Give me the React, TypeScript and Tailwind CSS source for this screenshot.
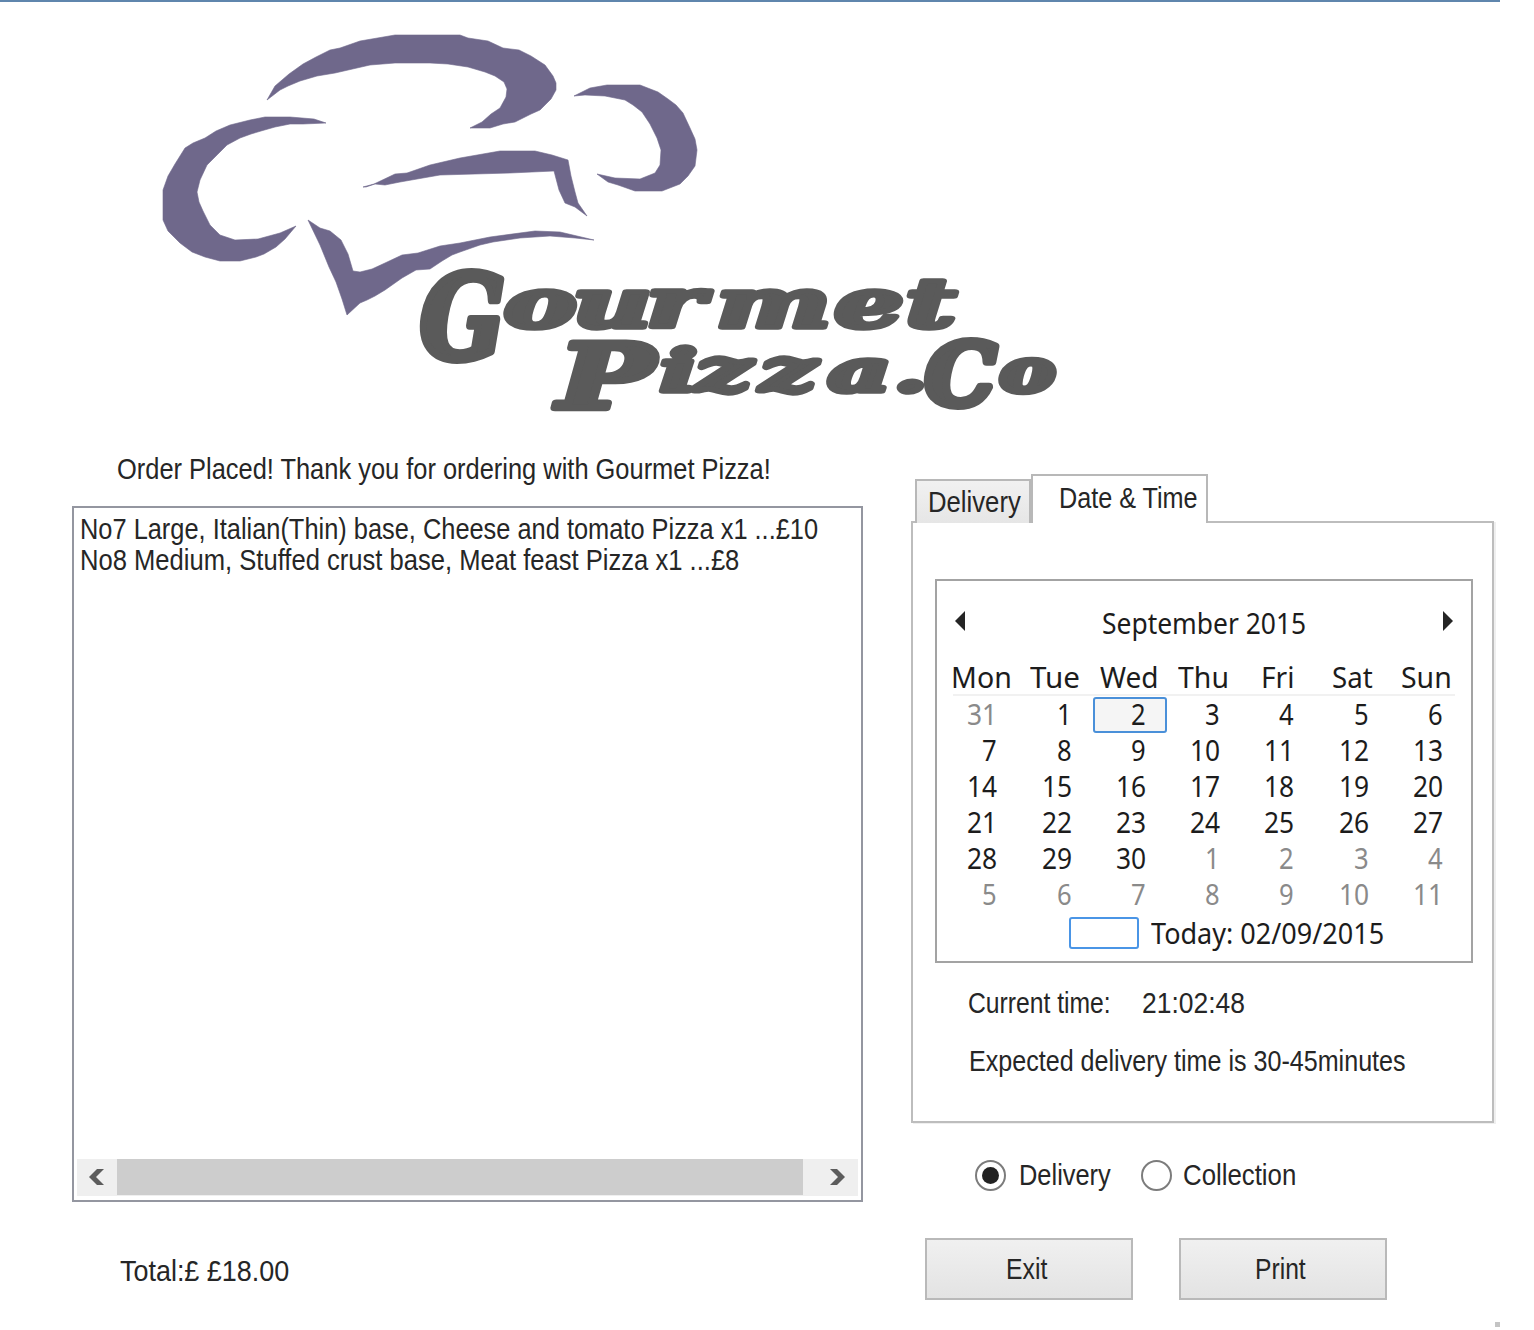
import { useLayoutEffect, useRef, useState } from "react";

/** Single line of text condensed or widened to fill its container. */
function Fit({ children, className }: { children: string; className: string }) {
  const box = useRef<HTMLSpanElement>(null);
  const text = useRef<HTMLSpanElement>(null);
  const [scale, setScale] = useState(1);
  useLayoutEffect(() => {
    if (box.current && text.current) {
      setScale(box.current.clientWidth / text.current.offsetWidth);
    }
  }, [children]);
  return (
    <span ref={box} className={`block shrink-0 ${className}`}>
      <span ref={text} className="inline-block origin-left whitespace-pre" style={{ transform: `scaleX(${scale})` }}>
        {children}
      </span>
    </span>
  );
}

function Logo() {
  return (
    <svg className="block h-[438px] w-[1500px]" viewBox="0 2 1500 438">
      <g fill="#6f688b" stroke="#6f688b" strokeWidth="0.6" strokeLinejoin="round">
        <path d="M267 100L275 86L289 74L303 64L316 57L330 50L340 48L360 41L395 35H460L468 38L488 41L503 48L519 50L531 56L545 65L553 76L556 83V90L551 99L540 110L531 114L515 122L503 124L490 128H470L482 122L491 114L500 108L506 97L507 89L504 82L495 76L485 72L468 67L448 64L430 63L395 63L370 65L335 73L317 76L300 81L288 86L280 90Z" />
        <path d="M326 123L314 119L290 117H265L250 120L230 125L216 131L205 138L193 143L185 148L175 164L168 176L163 190V220L168 231L180 243L192 252L205 257L220 261L240 261L256 257L264 254L276 247L285 239L296 226L280 233L258 239L235 240L220 235L210 225L203 211L199 202L197 192L200 180L207 165L218 154L227 145L240 138L251 134L261 131L275 127L290 124L303 124Z" />
        <path d="M574 96L590 88L607 85H640L658 92L668 99L676 105L683 113L690 128L695 139L697 150L695 166L688 176L680 184L662 191H635L618 185L608 182L597 174L615 178L640 179L655 173L660 165L661 150L657 138L650 124L642 112L633 105L625 100L605 96L585 95Z" />
        <path d="M363 187L374 184L395 174L407 173L430 165L460 158L500 151H535L552 155L568 160L571 176L575 192L578 203L587 216L575 207L565 203L559 190L554 171L510 173L440 175L400 182L385 185L375 184L366 187Z" />
        <path d="M308 220L320 228L330 231L341 240L348 254L353 271L360 272L372 269L385 263L402 255L418 253L440 246L460 243L490 237L535 231L560 232L594 240L575 238L550 236L520 238L493 242L480 245L460 252L452 255L442 261L430 269L416 270L402 278L385 290L375 296L367 300L360 303L347 315L342 299L336 282L329 267L320 245Z" />
      </g>
      <g
        fill="#5a5a5a"
        stroke="#5a5a5a"
        strokeWidth="6.5"
        strokeLinejoin="round"
        fontFamily="'DejaVu Serif', serif"
        fontWeight="bold"
        fontStyle="italic"
      >
        <text transform="translate(420 358) scale(0.86 1)" fontSize="116" strokeWidth="8">G</text>
        <text transform="translate(504 327) scale(1.62 1)" fontSize="67" x="0 42.500 88 131 204 248" strokeWidth="5.5">ourmet</text>
        <text transform="translate(558 408) scale(1.42 1)" fontSize="90">P</text>
        <text transform="translate(660 391) scale(1.68 1)" fontSize="58" strokeWidth="5.5" x="0 21.500 60 100 139">izza.</text>
        <text transform="translate(925 405) scale(1.04 1)" fontSize="86" strokeWidth="8">C</text>
        <text transform="translate(1000 391) scale(1.42 1)" fontSize="58">o</text>
      </g>
    </svg>
  );
}

function OrderList() {
  return (
    <div className="flex h-[696px] w-[791px] flex-col border-2 border-[#9496a0] bg-white px-[3px] pb-[3px]">
      <div className="h-[651px] pt-[6px] pl-[3px] leading-[31px]">
        <Fit className="w-[738px]">No7 Large, Italian(Thin) base, Cheese and tomato Pizza x1 ...£10</Fit>
        <Fit className="w-[659px]">No8 Medium, Stuffed crust base, Meat feast Pizza x1 ...£8</Fit>
      </div>
      <div className="flex h-[37px] items-start bg-[#efefef]">
        <svg className="w-10 shrink-0" height="37" viewBox="0 0 40 37">
          <path d="M12 18L20 10H27L19 18L27 26H20Z" fill="#5c5c5c" />
        </svg>
        <div className="h-[36px] w-[686px] shrink-0 bg-[#cdcdcd]" />
        <svg className="ml-[14px] w-10 shrink-0" height="37" viewBox="0 0 40 37">
          <path d="M28 18L20 10H13L21 18L13 26H20Z" fill="#5c5c5c" />
        </svg>
      </div>
    </div>
  );
}

const weekdays: [string, string][] = [
  ["Mon", "w-[61px]"],
  ["Tue", "w-[50px]"],
  ["Wed", "w-[59px]"],
  ["Thu", "w-[51px]"],
  ["Fri", "w-[34px]"],
  ["Sat", "w-[41px]"],
  ["Sun", "w-[51px]"],
];

const days = [31, ...Array.from({ length: 30 }, (_, i) => i + 1), ...Array.from({ length: 11 }, (_, i) => i + 1)];

function Calendar() {
  return (
    <div className="h-[384px] w-[538px] border-2 border-[#a3a3a3] px-[7px] font-['Noto_Sans','Open_Sans',sans-serif] text-[29px] text-[#1c1c1c]">
      <div className="mt-[22px] flex h-[40px] items-center justify-between px-[11px]">
        <svg width="11" height="20" viewBox="0 0 11 20" className="mb-[4px]"><path d="M0 10L10 0V20Z" fill="#252525" /></svg>
        <Fit className="w-[204px] leading-[40px]">September 2015</Fit>
        <svg width="11" height="20" viewBox="0 0 11 20" className="mb-[4px]"><path d="M11 10L1 0V20Z" fill="#252525" /></svg>
      </div>
      <div className="mt-[12px] grid h-[39px] grid-cols-7 leading-[43px]">
        {weekdays.map(([name, width]) => (
          <div key={name} className="flex justify-center">
            <Fit className={width}>{name}</Fit>
          </div>
        ))}
      </div>
      <div className="mx-[9px] mb-px h-[2px] bg-[#f1f1f1]" />
      <div className="grid grid-cols-7">
        {days.map((day, i) => (
          <div
            key={i}
            className={`flex h-[36px] items-start justify-end rounded-[3px] border-2 pr-[19px] leading-[30px] ${
              i === 2 ? "border-[#4a90d9] bg-[#f5f5f5]" : "border-transparent"
            } ${i === 0 || i > 30 ? "text-[#8a8a8a]" : ""}`}
          >
            <Fit className={day > 9 ? "w-[30px]" : "w-[15px]"}>{String(day)}</Fit>
          </div>
        ))}
      </div>
      <div className="mt-[4px] flex h-[32px] items-center pl-[125px]">
        <div className="mr-[12px] h-[32px] w-[70px] rounded-[3px] border-[2.500px] border-[#4a95e6]" />
        <Fit className="w-[233px] leading-[32px]">Today: 02/09/2015</Fit>
      </div>
    </div>
  );
}

function Tabs() {
  return (
    <div className="w-[583px]">
      <div className="flex h-[49px] items-end pl-[4px]">
        <div className="flex h-[44px] w-[116px] items-center border-2 border-b-0 border-[#b8b8b8] bg-linear-to-b from-[#f1f1f1] to-[#e6e6e6] pl-[11px]">
          <Fit className="w-[93px]">Delivery</Fit>
        </div>
        <div className="relative z-10 flex h-[49px] w-[177px] items-center border-2 border-b-0 border-[#b8b8b8] bg-white pb-[4px] pl-[26px]">
          <Fit className="w-[139px]">Date &amp; Time</Fit>
        </div>
      </div>
      <div className="-mt-[2px] h-[602px] w-[583px] border-2 border-[#bdbdbd] px-[22px] pt-[56px] shadow-[2px_1px_0_#efefef]">
        <Calendar />
        <div className="mt-[21px] flex h-[38px] items-center pl-[33px]">
          <Fit className="w-[143px]">Current time:</Fit>
          <Fit className="ml-[31px] w-[103px]">21:02:48</Fit>
        </div>
        <div className="mt-[20px] flex h-[38px] items-center pl-[34px]">
          <Fit className="w-[437px]">Expected delivery time is 30-45minutes</Fit>
        </div>
      </div>
    </div>
  );
}

function Radio({ checked }: { checked?: boolean }) {
  return (
    <span className="flex size-[31px] shrink-0 items-center justify-center rounded-full border-2 border-[#7c7c7c] bg-white">
      {checked && <span className="size-[17px] rounded-full bg-[#222222]" />}
    </span>
  );
}

export default function App() {
  return (
    <div className="relative h-[1330px] w-[1534px] overflow-hidden bg-white font-['Liberation_Sans',Arial,sans-serif] text-[29px] leading-[36px] text-[#262626]">
      <div className="h-[2px] w-[1500px] bg-[#5f86ad]" />
      <Logo />
      <div className="flex gap-12 pl-[72px]">
        <div className="w-[791px]">
          <div className="flex h-[66px] items-center pb-[8px] pl-[45px]">
            <Fit className="w-[654px]">Order Placed! Thank you for ordering with Gourmet Pizza!</Fit>
          </div>
          <OrderList />
          <div className="mt-[51px] pl-[48px]">
            <Fit className="w-[169px]">Total:£ £18.00</Fit>
          </div>
        </div>
        <div className="w-[583px] pt-[34px]">
          <Tabs />
          <div className="mt-[33px] flex h-[38px] items-center pl-[64px]">
            <Radio checked />
            <Fit className="ml-[13px] w-[92px]">Delivery</Fit>
            <span className="w-[30px]" />
            <Radio />
            <Fit className="ml-[11px] w-[113px]">Collection</Fit>
          </div>
          <div className="mt-[44px] flex gap-[46px] pl-[14px]">
            <button className="flex h-[62px] w-[208px] items-center justify-center border-2 border-[#b9b9b9] bg-linear-to-b from-[#f0f0f0] to-[#e3e3e3] pr-[6px]">
              <Fit className="w-[41px]">Exit</Fit>
            </button>
            <button className="flex h-[62px] w-[208px] items-center justify-center border-2 border-[#b9b9b9] bg-linear-to-b from-[#f0f0f0] to-[#e3e3e3] pr-[6px]">
              <Fit className="w-[51px]">Print</Fit>
            </button>
          </div>
        </div>
      </div>
      <div className="absolute top-[1322px] left-[1495px] size-[5px] bg-[#c4c4c4]" />
    </div>
  );
}
